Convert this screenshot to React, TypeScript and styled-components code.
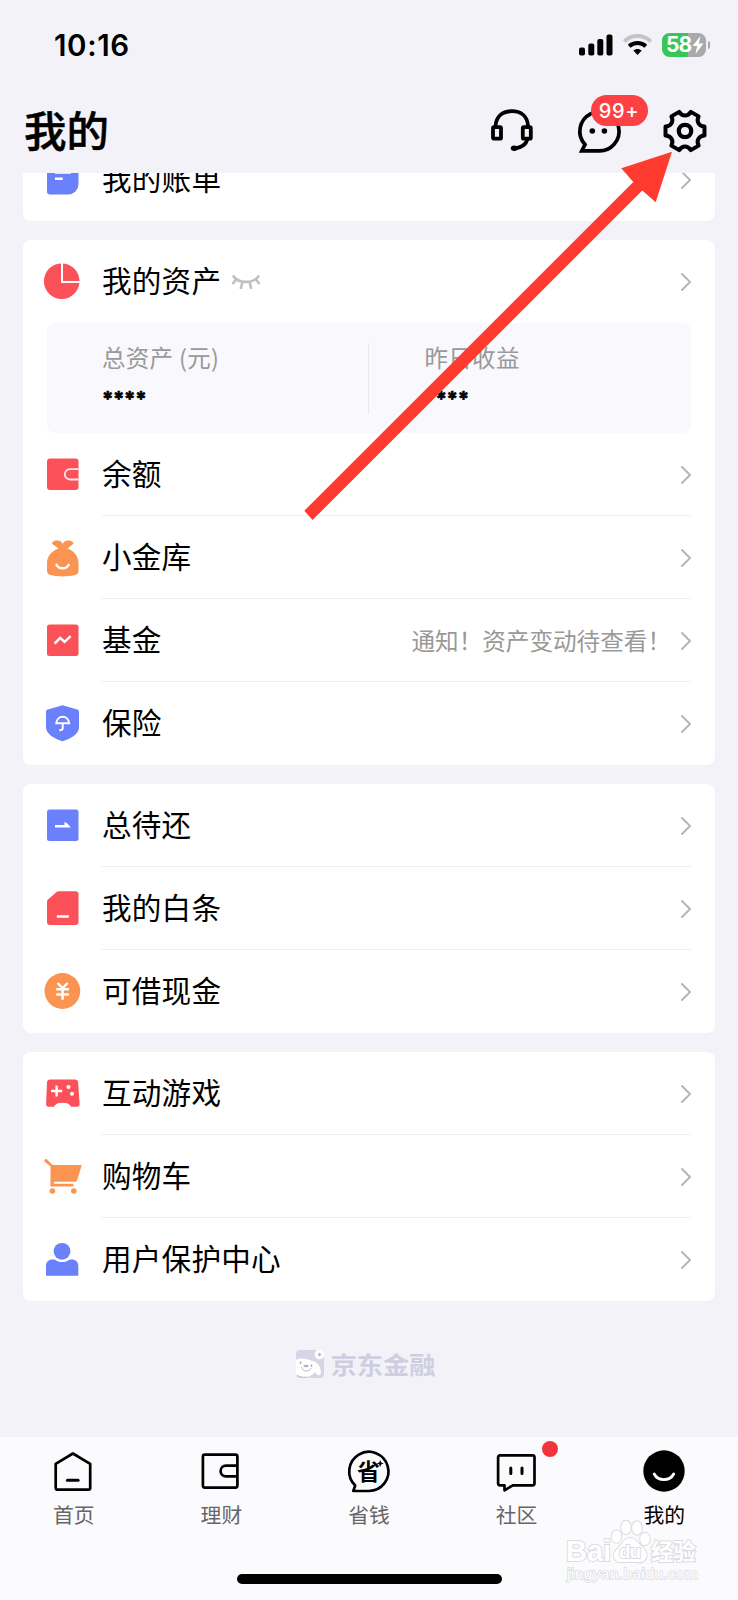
import React from "react";
import styled, { createGlobalStyle } from "styled-components";

const GlobalStyle = createGlobalStyle`
  * { box-sizing: border-box; }
  body {
    margin: 0;
    background: #f3f2f8;
    font-family: "Noto Sans CJK SC", sans-serif;
    color: #000;
  }
  svg { display: block; }
`;

const RED = "#fc5158";
const ORANGE = "#fb9450";
const BLUE = "#6b80fb";

const Screen = styled.div`
  position: relative;
  width: 738px;
  height: 1600px;
  display: flex;
  flex-direction: column;
  overflow: hidden;
  background: #f3f2f8;
`;

const StatusBar = styled.div`
  height: 90px;
  flex: none;
  display: flex;
  align-items: center;
  justify-content: space-between;
  padding: 0 28px 0 54px;
`;

const Clock = styled.span`
  font-family: Inter, sans-serif;
  font-weight: 600;
  font-size: 29.5px;
  letter-spacing: 0.6px;
  line-height: 36px;
`;

const StatusIcons = styled.div`
  display: flex;
  align-items: center;
  gap: 10px;
`;

const Battery = styled.div`
  display: flex;
  align-items: center;
  gap: 2px;
`;

const BatteryBody = styled.div`
  width: 44px;
  height: 24px;
  border-radius: 7.5px;
  display: flex;
  align-items: center;
  padding-left: 4px;
  background: linear-gradient(90deg, #39c559 58%, #a9a9ad 58%);
  color: #fff;
  font: 700 21px/24px Inter, sans-serif;
  letter-spacing: -0.8px;
`;

const BatteryCap = styled.div`
  width: 2px;
  height: 8px;
  border-radius: 0 3px 3px 0;
  background: #a9a9ad;
`;

const Header = styled.header`
  height: 83px;
  flex: none;
  display: flex;
  align-items: center;
  justify-content: space-between;
  padding: 0 29px 2px 24px;
`;

const Title = styled.h1`
  margin: 0;
  padding-bottom: 4px;
  font-size: 42.5px;
  line-height: 60px;
  font-weight: 500;
  -webkit-text-stroke: 0.5px #000;
`;

const Actions = styled.div`
  display: flex;
  align-items: center;
  gap: 38.5px;
`;

const Action = styled.div`
  position: relative;
  width: 48px;
  height: 48px;
`;

const CountBadge = styled.span`
  position: absolute;
  left: 16px;
  top: -12px;
  width: 57px;
  height: 31.5px;
  border-radius: 16px;
  background: #fc4044;
  color: #fff;
  text-align: center;
  font: 500 20px/32px Inter, sans-serif;
  letter-spacing: 0.6px;
`;

const Content = styled.main`
  height: 1264px;
  flex: none;
  overflow: hidden;
  display: flex;
  flex-direction: column;
  align-items: stretch;
  gap: 19.3px;
  padding: 0 23px;
`;

const Card = styled.section<{ $scrolled?: boolean }>`
  flex: none;
  margin-top: ${(p) => (p.$scrolled ? "-35px" : "0")};
  background: #fff;
  border-radius: 8px;
`;

const Row = styled.div`
  height: 82.9px;
  display: flex;
  align-items: center;
  gap: 20px;
  padding: 0 24px 0 19px;
`;

const RowIcon = styled.svg`
  margin-bottom: 0.4px;
`;

const RowBody = styled.div<{ $line?: boolean }>`
  flex: 1;
  height: 100%;
  display: flex;
  align-items: center;
  border-bottom: 1px solid ${(p) => (p.$line ? "#efeff1" : "transparent")};
`;

const Label = styled.span`
  padding-bottom: 1.4px;
  font-size: 29.6px;
  letter-spacing: 0.2px;
  line-height: 40px;
`;

const LidIcon = styled.svg`
  margin: 3px 0 0 10px;
`;

const Trailing = styled.div`
  margin-left: auto;
  display: flex;
  align-items: center;
  gap: 10px;
`;

const Arrowhead = styled.svg`
  margin-top: 2px;
`;

const Note = styled.span`
  color: #999;
  font-size: 23.6px;
  line-height: 32px;
`;

const Summary = styled.div`
  height: 110px;
  margin: 0 24px;
  padding: 20px 0 19px;
  display: flex;
  border-radius: 8px;
  background: #f8f8fd;
`;

const SummaryItem = styled.div<{ $first?: boolean }>`
  width: 322px;
  padding-left: ${(p) => (p.$first ? "55px" : "55.5px")};
  border-right: ${(p) => (p.$first ? "1px solid #e8e8ee" : "none")};
`;

const SummaryLabel = styled.div`
  margin-top: -1px;
  color: #999;
  font-size: 23.5px;
  letter-spacing: 0.3px;
  line-height: 30px;
`;

const SummaryValue = styled.div`
  margin-top: 12px;
  font: 700 20.5px/30px Inter, sans-serif;
  letter-spacing: -0.4px;
  -webkit-text-stroke: 0.6px #000;
`;

const Brand = styled.div`
  flex: none;
  display: flex;
  align-items: center;
  justify-content: center;
  gap: 7px;
  margin-top: 26px;
  height: 36px;
  padding-right: 7px;
  color: #cfcee0;
`;

const BrandName = styled.span`
  font-size: 26.2px;
  font-weight: 700;
  line-height: 36px;
  transform: scaleY(0.92);
`;

const TabBar = styled.nav`
  flex: 1;
  display: flex;
  flex-direction: column;
  align-items: center;
  background: #fbfbfd;
`;

const Tabs = styled.div`
  width: 100%;
  height: 137px;
  display: flex;
`;

const Tab = styled.div<{ $active?: boolean }>`
  flex: 1;
  position: relative;
  display: flex;
  flex-direction: column;
  align-items: center;
  padding-top: 11px;
  gap: 5px;
  color: ${(p) => (p.$active ? "#000" : "#666")};
  font-size: 20.8px;
  line-height: 30px;
`;

const Dot = styled.i`
  position: absolute;
  left: 99.5px;
  top: 4px;
  width: 16px;
  height: 16px;
  border-radius: 50%;
  background: #f5333b;
`;

const HomeIndicator = styled.div`
  width: 265px;
  height: 10px;
  border-radius: 5px;
  background: #000;
`;

const Overlay = styled.svg`
  position: absolute;
  left: 0;
  top: 0;
`;

const iconArt: Record<string, React.ReactNode> = {
  bill: (
    <>
      <path d="M8 4H36.5V25a10.500 10.500 0 0 1-10.500 10.500H8a3 3 0 0 1-3-3V7a3 3 0 0 1 3-3Z" fill={BLUE} />
      <path d="M13 13.600H29M13 19.800h7.700" stroke="#fff" strokeWidth="2.400" />
    </>
  ),
  pie: (
    <>
      <circle cx="19.700" cy="20.200" r="17.800" fill={RED} />
      <path d="M20 2V20.900H38" fill="none" stroke="#fff" strokeWidth="2" />
    </>
  ),
  wallet: (
    <>
      <rect x="5" y="4.500" width="31.500" height="31.500" rx="3" fill={RED} />
      <path d="M36.500 15.100H28a5.200 5.200 0 0 0 0 10.400h8.500" fill="none" stroke="#fff" strokeOpacity=".85" strokeWidth="1.800" />
    </>
  ),
  bag: (
    <>
      <path
        d="M16.500 11.500 10.500 7C9.300 5.800 11.500 3.600 15.500 3.600c3 0 5 2.200 5.200 3.800.3-1.600 2.300-3.800 5.300-3.800 4 0 6.200 2.200 5 3.400l-5.500 4.500c6.500 2 11 8 11 14.500v7.500c0 3-1.500 4-4.500 4.800-5.500 1.500-17 1.500-22.500 0C6.500 37.500 5 36.500 5 33.500V26c0-6.500 5-12.500 11.500-14.500Z"
        fill={ORANGE}
      />
      <path d="M14.500 27.800c2.600 4.600 9.600 4.600 12.200 0" fill="none" stroke="#fff" strokeWidth="2.400" strokeLinecap="round" />
    </>
  ),
  fund: (
    <>
      <rect x="5" y="4.500" width="31.500" height="31.500" rx="2.500" fill={RED} />
      <path d="m13.500 22.700 4.700-4.900 4.400 4 5.200-4.800" fill="none" stroke="#fff" strokeWidth="2.400" strokeLinecap="square" />
    </>
  ),
  shield: (
    <>
      <path d="m20.500 2.300 14.700 4.300c1.300.4 1.800 1 1.800 2.200v15.400c0 7-8.500 11.500-16.500 14-8-2.500-16.500-7-16.500-14V8.800c0-1.200.5-1.800 1.800-2.200Z" fill={BLUE} />
      <path d="M14.200 20.300c1-8.700 12-8.700 13 0ZM20.700 20.300v5c0 1.600-1 2-3.400 2" fill="none" stroke="#fff" strokeWidth="1.900" />
    </>
  ),
  repay: (
    <>
      <rect x="5" y="4.500" width="31.500" height="31.500" rx="2.500" fill={BLUE} />
      <path d="M13 20h9.500v-3.200q3.500 1.500 6.200 5.700H13Z" fill="#fff" />
    </>
  ),
  note: (
    <>
      <path d="M16.500 3.300h17a3 3 0 0 1 3 3V34a3 3 0 0 1-3 3H8a3 3 0 0 1-3-3V14c0-1.300.4-2 1.300-2.800l8-7c.7-.6 1.300-.9 2.200-.9Z" fill={RED} />
      <path d="M14.800 28.500h12" stroke="#fff" strokeWidth="2.500" />
    </>
  ),
  cash: (
    <>
      <circle cx="20.400" cy="20" r="17.900" fill={ORANGE} />
      <path d="m15.600 12 5 5.300 5-5.300M14.200 18.300h12.800M14.200 23.500h12.800M20.600 18v10.800" fill="none" stroke="#fff" strokeWidth="2.500" />
    </>
  ),
  game: (
    <>
      <path d="M8 6.500h25c1.800 0 2.900 1 3.100 2.800l1.500 22c.1 1.500-.9 2.400-2.400 2.400h-5c-1 0-1.600-.5-2.200-1.500-2-3.300-13-3.300-15 0-.6 1-1.200 1.500-2.200 1.500h-4.500c-1.400 0-2.300-.9-2.200-2.400L5 9.300C5.200 7.500 6.200 6.500 8 6.500Z" fill={RED} />
      <path d="M9 18h11.200M14.600 12.400v11.200" stroke="#fff" strokeWidth="2.400" />
      <circle cx="26.500" cy="14" r="2" fill="#fff" />
      <circle cx="30" cy="20.800" r="2" fill="#fff" />
    </>
  ),
  cart: (
    <>
      <path d="M10.500 9H38.600c.7 0 1 .5.800 1.200l-4 13.300c-.5 1.700-1 2.300-2.500 2.300h-21v2h18.300c1 0 1.300.3 1.300 1v1.600H8.500V10.300L3.300 6.300c-1.300-1-1.300-1.900-.7-2.700.8-.9 1.800-.7 2.800.2Z" fill={ORANGE} />
      <circle cx="10.400" cy="35" r="2.800" fill={ORANGE} />
      <circle cx="31.800" cy="35" r="2.800" fill={ORANGE} />
    </>
  ),
  user: (
    <>
      <circle cx="20" cy="12.300" r="8.400" fill={BLUE} />
      <path d="M4 36.700V27c0-4 2.500-6.500 6.500-6.500h1.300c1.800 0 3.300 2.600 8.400 2.600s6.600-2.600 8.400-2.600h1.200c4 0 6.500 2.500 6.500 6.500v9.700Z" fill={BLUE} />
    </>
  ),
};

const Chevron = () => (
  <Arrowhead width="10" height="18" viewBox="0 0 10 18" fill="none" stroke="#b5b5b7" strokeWidth="1.900" strokeLinecap="round" strokeLinejoin="round">
    <path d="m1 1 8 8-8 8" />
  </Arrowhead>
);

const ClosedEye = () => (
  <LidIcon width="30" height="19" viewBox="0 0 30 19" fill="none" stroke="#c0c0c2" strokeWidth="2.600">
    <path d="M2 2.500c5 8.500 21 8.500 26 0M5 6.500 1.500 11M25 6.500l3.500 4.500M11.500 9l-1.800 7M18.500 9l1.800 7" />
  </LidIcon>
);

type ItemProps = { icon: string; label: string; line?: boolean; note?: string; eye?: boolean };

const Item = ({ icon, label, line, note, eye }: ItemProps) => (
  <Row>
    <RowIcon width="40" height="40" viewBox="0 0 40 40">{iconArt[icon]}</RowIcon>
    <RowBody $line={line}>
      <Label>{label}</Label>
      {eye && <ClosedEye />}
      <Trailing>
        {note && <Note>{note}</Note>}
        <Chevron />
      </Trailing>
    </RowBody>
  </Row>
);

/* Six-toothed cog outline centred on (24, 24). */
const polar = (r: number, deg: number) => {
  const a = (deg * Math.PI) / 180;
  return `${(24 + r * Math.cos(a)).toFixed(2)} ${(24 + r * Math.sin(a)).toFixed(2)}`;
};
const cogPath =
  [0, 60, 120, 180, 240, 300]
    .map((t, i) => `${i ? "L" : "M"}${polar(20, t - 13)}L${polar(20, t + 13)}C${polar(14.6, t + 19)} ${polar(14.6, t + 41)} ${polar(20, t + 47)}`)
    .join("") + "Z";

const Headset = () => (
  <svg width="48" height="48" viewBox="0 0 48 48" fill="none" stroke="#000" strokeWidth="3.800">
    <path d="M7.500 19.500C8 9 15 4.200 23.800 4.200S39.600 9 40.100 19.500" />
    <rect x="5" y="20.200" width="8" height="11.500" rx="1" />
    <rect x="34.800" y="20.200" width="8" height="11.500" rx="1" />
    <path d="M39.300 32.500c-1.300 5-6 8-12.500 9" strokeLinecap="round" />
    <ellipse cx="26.200" cy="41.300" rx="3.400" ry="2.700" fill="#000" stroke="none" />
  </svg>
);

const Bubble = () => (
  <svg width="48" height="48" viewBox="1 0 48 48" fill="none" stroke="#000" strokeWidth="3.700">
    <path d="M24 43.800H7.800l3.200-6.300A19.600 19.600 0 1 1 24 43.800Z" />
    <circle cx="18.300" cy="24" r="2.800" fill="#000" stroke="none" />
    <circle cx="30.400" cy="24" r="2.800" fill="#000" stroke="none" />
  </svg>
);

const Cog = () => (
  <svg width="48" height="48" viewBox="0 0 48 48" fill="none" stroke="#000" strokeLinejoin="round">
    <path d={cogPath} strokeWidth="4" />
    <circle cx="24" cy="24" r="6.200" strokeWidth="4.300" />
  </svg>
);

const tabStroke = { fill: "none", stroke: "#000", strokeWidth: 2.7, strokeLinejoin: "round" as const };

const HomeIcon = () => (
  <svg width="46" height="46" viewBox="0.6 0 46 46" {...tabStroke}>
    <path d="m22.500 5.500 17.300 10.300V40a1.700 1.700 0 0 1-1.700 1.700H7a1.700 1.700 0 0 1-1.700-1.700V15.800Z" />
    <path d="M17 32.300h10.700" strokeLinecap="round" strokeWidth="3" />
  </svg>
);
const WalletIcon = () => (
  <svg width="46" height="46" viewBox="0 0 46 46" {...tabStroke}>
    <rect x="4.900" y="6.600" width="34.500" height="33" rx="2" />
    <path d="M39.400 17.600H28a5.400 5.400 0 0 0 0 10.800h11.400" />
  </svg>
);
const SaveIcon = () => (
  <svg width="46" height="46" viewBox="0 0 46 46" {...tabStroke}>
    <path d="M23 43H7.300l1.900-5.500A19.600 19.600 0 1 1 23 43Z" />
    <text x="11" y="31.500" fontSize="23" fontWeight="700" fontFamily="Noto Sans CJK SC, sans-serif" fill="#000" stroke="none">省</text>
    <path d="m34.200 12 1 2.500 2.500 1-2.500 1-1 2.500-1-2.500-2.500-1 2.500-1Z" fill="#000" stroke="none" />
  </svg>
);
const CommunityIcon = () => (
  <svg width="46" height="46" viewBox="0.5 0 46 46" {...tabStroke}>
    <path d="M6 7.300h33a2 2 0 0 1 2 2v26a2 2 0 0 1-2 2H19.300l-8.300 5v-5H6.600a2 2 0 0 1-2-2v-26a2 2 0 0 1 2-2Z" />
    <path d="M17.300 20v5.600M28.500 20v5.600" strokeLinecap="round" strokeWidth="3" />
  </svg>
);
const FaceIcon = () => (
  <svg width="46" height="46" viewBox="0 0 46 46">
    <circle cx="23" cy="23" r="20.700" />
    <path d="M13.200 26c4 7.500 15.500 7.500 19.500 0" fill="none" stroke="#fff" strokeWidth="2.800" strokeLinecap="round" />
  </svg>
);

const BrandMark = () => (
  <svg width="28" height="28" viewBox="0 0 28 28">
    <rect width="28" height="28" rx="4" fill="#d6d5e5" />
    <path d="M0 10c5-3 11-1 15 .5 4 1 7 2.500 8.500 6 1.500 3.500 2 7 .5 8.500-2 1-4-1-5-3-4 6-14 6.500-19 3Z" fill="#fff" />
    <path d="M1 25c2 2 6 2.800 9 2M5.500 17c1 5 8 5.500 9.500 1" fill="none" stroke="#b9b8cc" strokeWidth="1" />
    <ellipse cx="10" cy="16" rx="2.700" ry="1.200" fill="#b4b3c8" />
    <path d="M4.500 11.500v2.500M15.500 14.500v2.500" stroke="#a9a8be" strokeWidth="1.400" />
    <circle cx="23.500" cy="4.500" r="4.800" fill="#fff" />
    <path d="m23.500 2.500 2 2-2 2-2-2Z" fill="#b9b8cc" />
  </svg>
);

const tabs: { label: string; art: React.ReactNode; dot?: boolean; active?: boolean }[] = [
  { label: "首页", art: <HomeIcon /> },
  { label: "理财", art: <WalletIcon /> },
  { label: "省钱", art: <SaveIcon /> },
  { label: "社区", art: <CommunityIcon />, dot: true },
  { label: "我的", art: <FaceIcon />, active: true },
];

export default function App() {
  return (
    <Screen>
      <GlobalStyle />
      <StatusBar>
        <Clock>10:16</Clock>
        <StatusIcons>
          <svg width="34" height="22" viewBox="0 0 34 22">
            <rect x="0" y="13.500" width="6" height="8" rx="2" />
            <rect x="9.300" y="9.500" width="6" height="12" rx="2" />
            <rect x="18.300" y="5" width="6" height="16.500" rx="2" />
            <rect x="27.500" y="0.500" width="6" height="21" rx="2" />
          </svg>
          <svg width="29" height="22" viewBox="0 0 29 22" fill="none">
            <path d="M1.300 7.500C8.500.2 20.500.2 27.700 7.500" stroke="#c4c4c8" strokeWidth="4" />
            <path d="M6.200 12.300c4.500-4.300 12.100-4.300 16.600 0" stroke="#000" strokeWidth="4" />
            <path d="M10.300 16.600c2.300-2.200 6.100-2.200 8.400 0L14.500 21Z" fill="#000" />
          </svg>
          <Battery>
            <BatteryBody>
              58
              <svg width="12" height="18" viewBox="0 0 12 18">
                <path d="M8.500 0 .5 10h4.700L3.500 18l8-10.500H6.800Z" fill="#fff" />
              </svg>
            </BatteryBody>
            <BatteryCap />
          </Battery>
        </StatusIcons>
      </StatusBar>

      <Header>
        <Title>我的</Title>
        <Actions>
          <Action><Headset /></Action>
          <Action>
            <Bubble />
            <CountBadge>99+</CountBadge>
          </Action>
          <Action><Cog /></Action>
        </Actions>
      </Header>

      <Content>
        <Card $scrolled>
          <Item icon="bill" label="我的账单" />
        </Card>
        <Card>
          <Item icon="pie" label="我的资产" eye />
          <Summary>
            <SummaryItem $first>
              <SummaryLabel>总资产 (元)</SummaryLabel>
              <SummaryValue>****</SummaryValue>
            </SummaryItem>
            <SummaryItem>
              <SummaryLabel>昨日收益</SummaryLabel>
              <SummaryValue>****</SummaryValue>
            </SummaryItem>
          </Summary>
          <Item icon="wallet" label="余额" line />
          <Item icon="bag" label="小金库" line />
          <Item icon="fund" label="基金" note="通知！资产变动待查看！" line />
          <Item icon="shield" label="保险" />
        </Card>
        <Card>
          <Item icon="repay" label="总待还" line />
          <Item icon="note" label="我的白条" line />
          <Item icon="cash" label="可借现金" />
        </Card>
        <Card>
          <Item icon="game" label="互动游戏" line />
          <Item icon="cart" label="购物车" line />
          <Item icon="user" label="用户保护中心" />
        </Card>
        <Brand>
          <BrandMark />
          <BrandName>京东金融</BrandName>
        </Brand>
      </Content>

      <TabBar>
        <Tabs>
          {tabs.map((t) => (
            <Tab key={t.label} $active={t.active}>
              {t.art}
              {t.label}
              {t.dot && <Dot />}
            </Tab>
          ))}
        </Tabs>
        <HomeIndicator />
      </TabBar>

      <Overlay width="738" height="1600" viewBox="0 0 738 1600">
        <path d="M304.300 510.700 633.300 182l-12-13.700 50.700-16.600-16.300 50.600-13.400-11.800L312.500 520Z" fill="#ff3b30" />
        <g fill="#fff" stroke="#dcdcdf" strokeWidth="2" paintOrder="stroke" fontFamily="Liberation Sans, Noto Sans CJK SC, sans-serif" fontWeight="700">
          <ellipse cx="616.500" cy="1536.500" rx="4.800" ry="6.300" />
          <ellipse cx="626" cy="1527.500" rx="4.800" ry="6.800" />
          <ellipse cx="637" cy="1528" rx="4.800" ry="6.800" />
          <ellipse cx="645" cy="1539" rx="4.800" ry="6.300" />
          <path d="M630 1538c6 0 8 5 12 9s6 7 4 11-6 5-10 4h-12c-6 1-9-1-10-5s2-7 5-10c4-4 5-9 11-9Z" />
          <text x="566" y="1561" fontSize="29" textLength="45">Bai</text>
          <text x="619" y="1558" fontSize="19" textLength="22">du</text>
          <text x="651" y="1560" fontSize="22.500" textLength="45">经验</text>
          <text x="567" y="1579" fontSize="15.500" textLength="131" fontWeight="400" strokeWidth="1.500">jingyan.baidu.com</text>
        </g>
      </Overlay>
    </Screen>
  );
}
